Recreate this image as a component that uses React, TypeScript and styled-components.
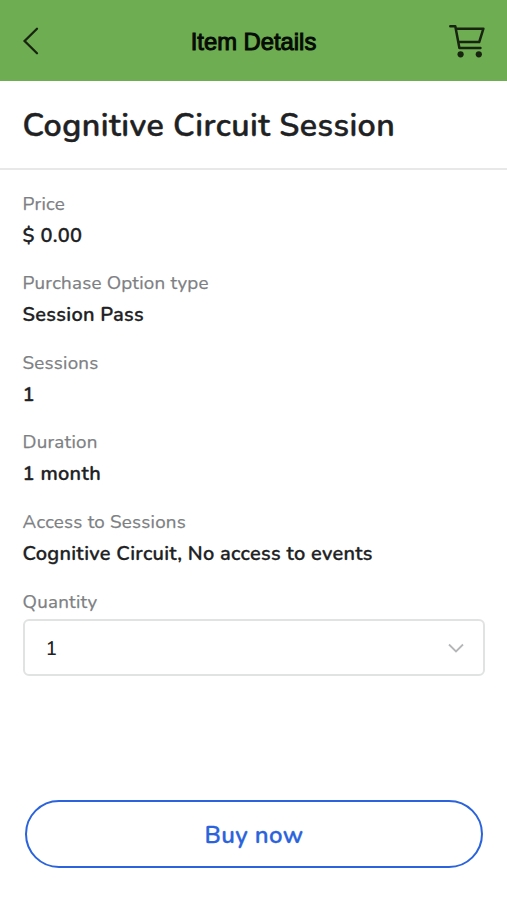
import React from "react";
import styled, { createGlobalStyle } from "styled-components";

const fontStack = `Nunito, "Open Sans", sans-serif`;

const Global = createGlobalStyle`
  * { box-sizing: border-box; }
  body { margin: 0; background: #fff; font-family: ${fontStack}; color: #202123; }
`;

const Screen = styled.div`
  width: 100%;
  height: 900px;
  display: flex;
  flex-direction: column;
  background: #fff;
`;

const Header = styled.header`
  height: 81px;
  flex: none;
  display: grid;
  grid-template-columns: 1fr auto 1fr;
  align-items: center;
  padding: 1px 21px 0;
  background: #6ead52;
`;

const HeaderTitle = styled.h1`
  margin: 0;
  padding-top: 2px;
  font: 400 23.8px/28px "Liberation Sans", Arial, sans-serif;
  -webkit-text-stroke: 1px #060b04;
  color: #060b04;
`;

const IconButton = styled.button<{ $end?: boolean }>`
  justify-self: ${(p) => (p.$end ? "end" : "start")};
  display: flex;
  padding: 0;
  border: 0;
  background: none;
  color: #17240f;
`;

const TitleBar = styled.div`
  height: 89px;
  flex: none;
  display: flex;
  align-items: center;
  padding: 1px 22.5px 0;
  border-bottom: 2px solid #e8e8e8;
`;

const ItemTitle = styled.h2`
  margin: 0;
  font-size: 32.2px;
  font-weight: 600;
  line-height: 44px;
  letter-spacing: 0.42px;
  white-space: nowrap;
  -webkit-text-stroke: 0.45px currentColor;
`;

const Details = styled.dl`
  margin: 0;
  padding: 18.7px 22px 0 22.6px;
  flex: 1;
`;

const Field = styled.div`
  height: 79.6px;
`;

const Label = styled.dt`
  font-size: 18.8px;
  font-weight: 400;
  line-height: 30px;
  letter-spacing: 0.22px;
  color: #7d8083;
  -webkit-text-stroke: 0.25px currentColor;
`;

const Value = styled.dd`
  margin: 0;
  font-size: 20px;
  font-weight: 600;
  line-height: 34px;
  letter-spacing: 0.28px;
  -webkit-text-stroke: 0.3px currentColor;
`;

const Select = styled.button`
  width: 100%;
  height: 57px;
  margin-top: 2px;
  display: flex;
  align-items: center;
  justify-content: space-between;
  padding: 2px 19px 0 21px;
  border: 2px solid #e1e2e2;
  border-radius: 6px;
  background: #fff;
  font: 500 19.5px ${fontStack};
  color: #202123;
`;

const BuyButton = styled.button`
  flex: none;
  height: 68px;
  margin: 0 24px 32px 25px;
  padding: 1px 0 0;
  border: 2.5px solid #2b63dc;
  border-radius: 34px;
  background: #fff;
  font: 600 24px ${fontStack};
  letter-spacing: 0.35px;
  -webkit-text-stroke: 0.3px currentColor;
  color: #2b63dc;
`;

const fields = [
  ["Price", "$ 0.00"],
  ["Purchase Option type", "Session Pass"],
  ["Sessions", "1"],
  ["Duration", "1 month"],
  ["Access to Sessions", "Cognitive Circuit, No access to events"],
];

const BackIcon = () => (
  <svg width="18" height="28" viewBox="0 0 18 28" fill="none" stroke="currentColor" strokeWidth="2.3" strokeLinecap="round">
    <path d="M16 1.7 3.6 14 16 26.3" />
  </svg>
);

const CartIcon = () => (
  <svg width="37" height="34" viewBox="0 0 37 34" fill="none" stroke="currentColor" strokeWidth="2.5" strokeLinecap="round" strokeLinejoin="round">
    <path d="M1.3 2.2h5l4.1 21.7h21M7 4.7h27.4l-4.2 13.4H9.4" />
    <circle cx="11.6" cy="30.3" r="3.1" fill="currentColor" stroke="none" />
    <circle cx="29.8" cy="30.3" r="3.1" fill="currentColor" stroke="none" />
  </svg>
);

const ChevronDown = () => (
  <svg width="16" height="10" viewBox="0 0 16 10" fill="none" stroke="#b5b6b7" strokeWidth="1.8">
    <path d="m1 1.5 7 7 7-7" />
  </svg>
);

export default function App() {
  return (
    <Screen>
      <Global />
      <Header>
        <IconButton aria-label="Back"><BackIcon /></IconButton>
        <HeaderTitle>Item Details</HeaderTitle>
        <IconButton $end aria-label="Cart"><CartIcon /></IconButton>
      </Header>
      <TitleBar><ItemTitle>Cognitive Circuit Session</ItemTitle></TitleBar>
      <Details>
        {fields.map(([label, value]) => (
          <Field key={label}>
            <Label>{label}</Label>
            <Value>{value}</Value>
          </Field>
        ))}
        <Label>Quantity</Label>
        <Select>1<ChevronDown /></Select>
      </Details>
      <BuyButton>Buy now</BuyButton>
    </Screen>
  );
}
